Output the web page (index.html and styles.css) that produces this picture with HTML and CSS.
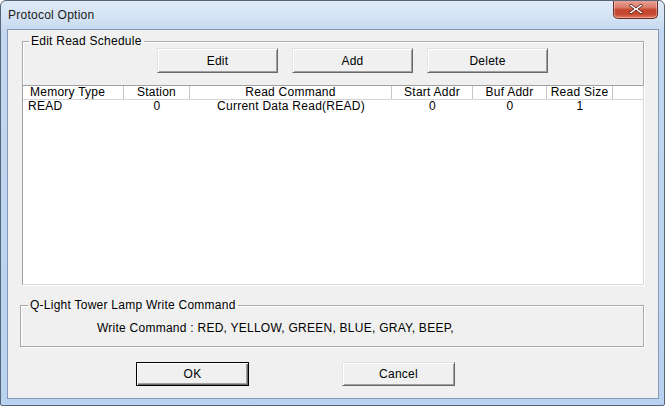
FILE: index.html
```html
<!DOCTYPE html>
<html>
<head>
<meta charset="utf-8">
<link rel="stylesheet" href="styles.css">
</head>
<body>
<div class="window">
  <div class="titlebar">
    <span class="title">Protocol Option</span>
    <div class="close">
      <svg width="16" height="12" viewBox="0 0 16 12">
        <path d="M3 1 L8 5 L13 1 L15 2.5 L10 6 L15 9.5 L13 11 L8 7 L3 11 L1 9.5 L6 6 L1 2.5 Z" fill="#fff" stroke="#5a1e16" stroke-width="0.9" stroke-linejoin="round"/>
      </svg>
    </div>
  </div>
  <div class="client">
    <fieldset class="group g1">
      <legend class="glabel">Edit Read Schedule</legend>
      <div class="btnrow">
        <button class="btn">Edit</button>
        <button class="btn">Add</button>
        <button class="btn">Delete</button>
      </div>
      <div class="list">
        <div class="hdr">
          <div class="hc left">Memory Type</div>
          <div class="hc">Station</div>
          <div class="hc">Read Command</div>
          <div class="hc">Start Addr</div>
          <div class="hc">Buf Addr</div>
          <div class="hc">Read Size</div>
          <div class="hc last"></div>
        </div>
        <div class="row">
          <div class="c left">READ</div>
          <div class="c">0</div>
          <div class="c">Current Data Read(READ)</div>
          <div class="c">0</div>
          <div class="c">0</div>
          <div class="c">1</div>
          <div class="c"></div>
        </div>
      </div>
    </fieldset>
    <fieldset class="group g2">
      <legend class="glabel">Q-Light Tower Lamp Write Command</legend>
      <div class="write">Write Command : RED, YELLOW, GREEN, BLUE, GRAY, BEEP,</div>
    </fieldset>
    <div class="actions">
      <button class="btn big default">OK</button>
      <button class="btn big">Cancel</button>
    </div>
  </div>
</div>
</body>
</html>
```
FILE: styles.css
```css
* { box-sizing: border-box; }
html, body { margin: 0; padding: 0; background: #fff; }
body { font-family: "Liberation Sans", Arial, sans-serif; font-size: 12px; color: #000; letter-spacing: 0.25px; }

.window {
  width: 665px;
  height: 406px;
  border: 1px solid #56657a;
  border-radius: 6px 6px 2px 2px;
  background: linear-gradient(180deg, #dfeaf7 0px, #d3e2f4 18px, #c3d8f0 30px, #b9d2ef 100%);
  display: flex;
  flex-direction: column;
  overflow: hidden;
}

.titlebar {
  height: 28px;
  display: flex;
  align-items: flex-start;
  justify-content: space-between;
  padding-left: 7px;
}
.title {
  margin-top: 7px;
  font-size: 12px;
  color: #1a1a1a;
}
.close {
  width: 45px;
  height: 19px;
  margin-right: 6px;
  margin-top: -1px;
  border: 1px solid #6d2a22;
  border-top: none;
  border-radius: 0 0 5px 5px;
  background: linear-gradient(180deg, #e9a99c 0%, #d97d6b 40%, #c5432d 55%, #c84a32 80%, #e07a5f 100%);
  box-shadow: inset 0 0 0 1px rgba(255,255,255,0.35);
  display: flex;
  align-items: center;
  justify-content: center;
}

.client {
  margin-left: 6px;
  width: 652px;
  height: 370px;
  border: 1px solid #8399b5;
  background: #f0f0f0;
  display: flex;
  flex-direction: column;
  padding-left: 14px;
}

.group {
  margin: 0;
  padding: 0;
  border: 1px solid #a8a8a8;
  box-shadow: inset 1px 1px 0 #fff, 1px 1px 0 #fff;
  min-width: 0;
}
.glabel {
  padding: 0 2px;
  margin-left: 6px;
  line-height: 14px;
  font-size: 12px;
}

.g1 {
  margin-top: 4px;
  width: 622px;
  height: 251px;
  display: flex;
  flex-direction: column;
}
.btnrow {
  display: flex;
  gap: 14px;
  padding-left: 134px;
}
.btn {
  font-family: "Liberation Sans", Arial, sans-serif;
  font-size: 12px;
  letter-spacing: 0.25px;
  color: #000;
  background: #f0f0f0;
  width: 121px;
  height: 25px;
  padding: 0;
  border: 1px solid;
  border-color: #e3e3e3 #696969 #696969 #e3e3e3;
  box-shadow: inset 1px 1px 0 #fff, inset -1px -1px 0 #a0a0a0;
}

.list {
  margin: 12px -1px -1px -1px;
  height: 200px;
  background: #fff;
  border: 1px solid #a0a0a0;
  border-right-color: #d8d8d8;
  border-bottom-color: #d8d8d8;
}
.hdr, .row {
  display: grid;
  grid-template-columns: 101px 66px 202px 81px 74px 66px 1fr;
}
.hdr {
  height: 14px;
  border-bottom: 1px solid #d5d5d5;
  background: #fff;
}
.hc {
  line-height: 13px;
  text-align: center;
  border-right: 1px solid #c6c6c6;
  white-space: nowrap;
  overflow: hidden;
}
.hc.left { text-align: left; padding-left: 7px; }
.hc.last { border-right: none; }
.row { height: 13px; }
.c {
  line-height: 12px;
  text-align: center;
  white-space: nowrap;
}
.c.left { text-align: left; padding-left: 5px; }

.g2 {
  margin-top: 13px;
  margin-left: -2px;
  width: 624px;
  height: 49px;
}
.g2 .glabel { margin-left: 7px; }
.write {
  padding-top: 9px;
  padding-left: 76px;
  line-height: 14px;
}

.actions {
  margin-top: 15px;
  display: flex;
  gap: 93px;
  padding-left: 114px;
}
.btn.big { width: 113px; height: 24px; }
.btn.default {
  border-color: #000 #000 #000 #000;
  box-shadow: inset 1px 1px 0 #fff, inset -1px -1px 0 #696969, inset -2px -2px 0 #a0a0a0;
}
```
